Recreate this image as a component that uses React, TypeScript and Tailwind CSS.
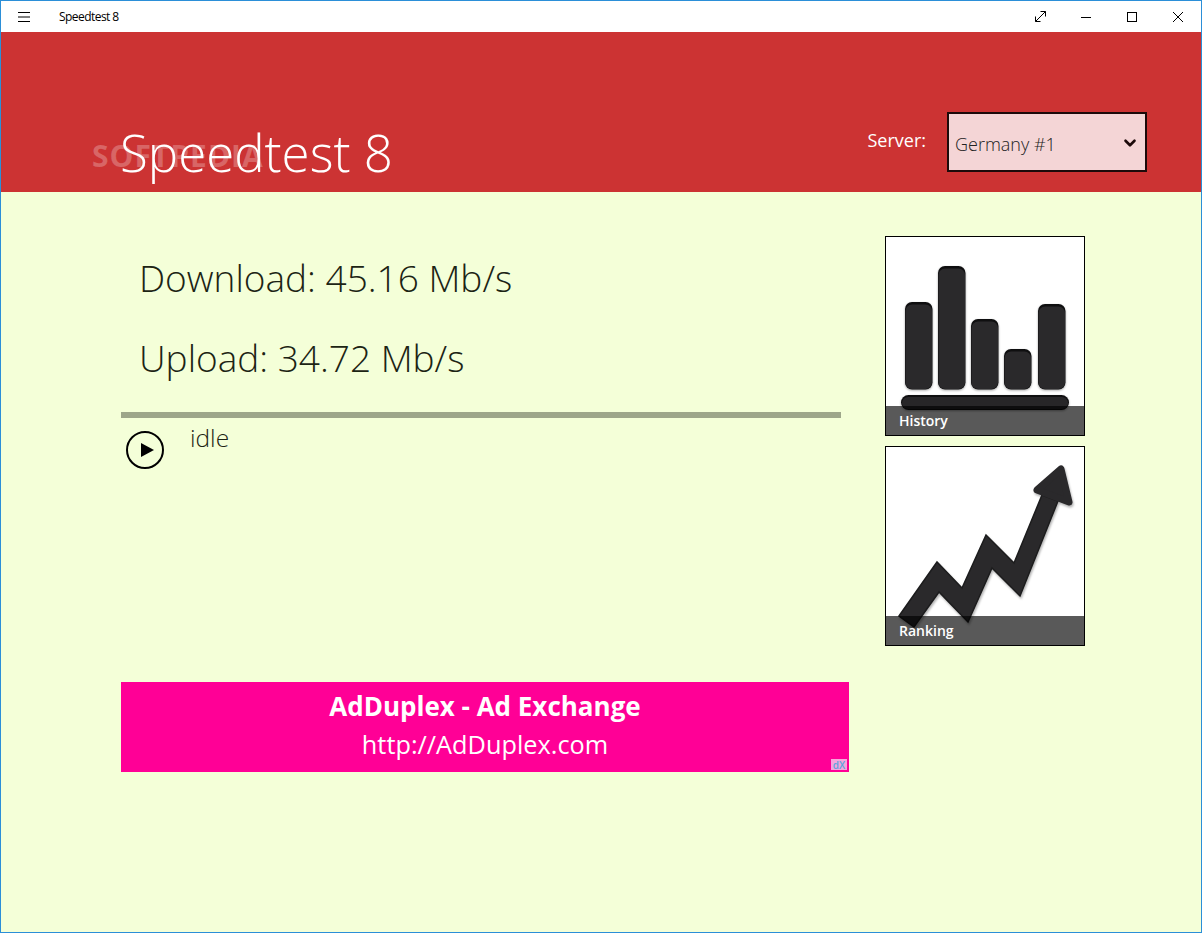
import { ChevronDown } from "lucide-react";

const font = "font-['Open_Sans','Noto_Sans',sans-serif]";

function BarsIcon() {
  const bars = [
    { x: 19, y: 65, h: 87.5 },
    { x: 52, y: 29, h: 123.5 },
    { x: 85, y: 82, h: 70.5 },
    { x: 118, y: 112, h: 40.5 },
    { x: 152, y: 67, h: 85.5 },
  ];
  return (
    <svg width="198" height="198" viewBox="0 0 198 198" className="block drop-shadow-[0_1px_1px_rgba(0,0,0,0.35)]">
      {bars.map((b) => (
        <g key={b.x}>
          <rect x={b.x} y={b.y} width="27.5" height={b.h} rx="7" fill="#0f0f10" />
          <rect x={b.x + 0.5} y={b.y + 2.5} width="26.5" height={b.h - 3} rx="6.5" fill="#2a292b" />
        </g>
      ))}
      <rect x="15" y="158" width="168" height="15" rx="7.5" fill="#0f0f10" />
      <rect x="16" y="160" width="166" height="12" rx="6" fill="#272628" />
    </svg>
  );
}

function ArrowIcon() {
  return (
    <svg width="198" height="198" viewBox="0 0 198 198" className="block drop-shadow-[1px_2px_1px_rgba(0,0,0,0.3)]">
      <path
        d="M13 169 L51 115 L76 141 L100 88 L128 116 L156 48 L172 54 L134 149 L106 121 L82 175 L53 145 L28 180 Z"
        fill="#2a292b"
        stroke="#1c1c1d"
        strokeWidth="1.5"
        strokeLinejoin="miter"
      />
      <path
        d="M151 43 L175 22 L183 55 Z"
        fill="#2a292b"
        stroke="#2a292b"
        strokeWidth="7"
        strokeLinejoin="round"
      />
    </svg>
  );
}

function Tile({ label, icon }: { label: string; icon: React.ReactNode }) {
  return (
    <div className="relative h-[200px] w-[200px] border border-black bg-white">
      {icon}
      <div className="absolute inset-x-0 bottom-0 flex h-[29px] items-center bg-black/65 pl-[13px] text-[14px] font-semibold text-white">
        {label}
      </div>
    </div>
  );
}

export default function App() {
  return (
    <div className={`flex h-[933px] w-[1202px] flex-col overflow-hidden border border-[#2b8fd8] bg-[#f4ffd8] ${font}`}>
      {/* Title bar */}
      <div className="flex h-[31px] items-center bg-white text-black">
        <svg width="12" height="10" viewBox="0 0 12 10" className="ml-[17px]" stroke="black" strokeWidth="1">
          <path d="M0 0.5H12M0 5H12M0 9.5H12" />
        </svg>
        <span className="ml-[29px] text-[12px] tracking-[-0.55px]">Speedtest 8</span>
        <div className="ml-auto flex items-center">
          <svg width="11" height="11" viewBox="0 0 11 11" fill="none" stroke="black" strokeWidth="1" className="mr-[35px]">
            <path d="M0.5 10.5L10.5 0.5M5.5 0.5H10.5V5.5M0.5 5.5V10.5H5.5" />
          </svg>
          <svg width="10" height="10" viewBox="0 0 10 10" stroke="black" strokeWidth="1" className="mr-[36px]">
            <path d="M0 5.5H10" />
          </svg>
          <svg width="10" height="10" viewBox="0 0 10 10" fill="none" stroke="black" strokeWidth="1" className="mr-[36px]">
            <rect x="0.5" y="0.5" width="9" height="9" />
          </svg>
          <svg width="10" height="10" viewBox="0 0 10 10" stroke="black" strokeWidth="1" className="mr-[18px]">
            <path d="M0 0L10 10M10 0L0 10" />
          </svg>
        </div>
      </div>

      {/* Header */}
      <div className="relative flex h-[160px] items-end bg-[#cc3333] pl-[119px] pr-[54px] pb-[20px] text-white">
        <h1 className="mb-[-12px] text-[51px] leading-[64px] font-light">Speedtest 8</h1>
        <span className="absolute left-[91px] top-[108px] text-[30px] leading-[32px] font-bold tracking-[1px] text-white/25">
          SOFTPEDIA
        </span>
        <div className="ml-auto flex items-center">
          <span className="mr-[21px] mb-[3px] text-[18px]">Server:</span>
          <div className="relative h-[60px] w-[200px]">
            <select className="h-full w-full appearance-none border-2 border-[#1c0a0a] bg-[#f4d5d6] pl-[6px] pt-[5px] text-[18px] font-light text-[#222]">
              <option>Germany #1</option>
            </select>
            <ChevronDown size={18} strokeWidth={3.5} className="pointer-events-none absolute right-[8px] top-[22px] text-[#1c0a0a]" />
          </div>
        </div>
      </div>

      {/* Body */}
      <div className="flex flex-1 pl-[120px] pt-[44px] text-[#1c2414]">
        <div className="w-[728px]">
          <div className="w-[720px]">
            <div className="mt-[2px] pl-[18px] text-[37px] leading-[80px] font-light">
              <p>Download: 45.16 Mb/s</p>
              <p>Upload: 34.72 Mb/s</p>
            </div>
            <div className="mt-[14px] h-[6px] bg-[#9da68a]" />
            <div className="flex h-[52px] items-start pl-[5px] pt-[13px]">
              <svg width="38" height="38" viewBox="0 0 38 38">
                <circle cx="19" cy="19" r="18" fill="none" stroke="black" strokeWidth="2" />
                <path d="M15 12 L28 19 L15 26 Z" fill="black" />
              </svg>
              <span className="ml-[26px] mt-[-9px] text-[24.5px] leading-[32px] font-light">idle</span>
            </div>
          </div>
          <div className="relative mt-[212px] flex h-[90px] flex-col items-center bg-[#ff0096] text-white">
            <p className="mt-[7px] text-[26px] leading-[34px] font-bold">AdDuplex - Ad Exchange</p>
            <p className="mt-[4px] text-[25.3px] leading-[34px]">http://AdDuplex.com</p>
            <span className="absolute right-[2px] bottom-[2px] flex h-[11px] w-[16px] items-center justify-center bg-[#f7a6dc] text-[10px] leading-none font-semibold text-[#5fa4dc]">
              dX
            </span>
          </div>
        </div>
        <div className="ml-[36px] flex flex-col gap-[10px]">
          <Tile label="History" icon={<BarsIcon />} />
          <Tile label="Ranking" icon={<ArrowIcon />} />
        </div>
      </div>
    </div>
  );
}
